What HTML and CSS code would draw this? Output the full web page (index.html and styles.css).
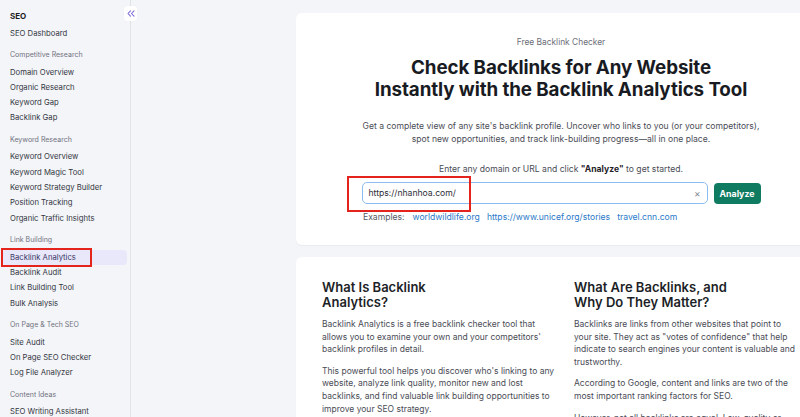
FILE: index.html
```html
<!DOCTYPE html>
<html>
<head>
<meta charset="utf-8">
<link rel="stylesheet" href="styles.css">
</head>
<body>
<div class="app">
  <aside class="sidebar">
    <button class="collapse" aria-label="Collapse">
      <svg width="8" height="7" viewBox="0 0 8 7"><path d="M3.5 0.8 L1 3.5 L3.5 6.2 M7 0.8 L4.5 3.5 L7 6.2" fill="none" stroke="#7b68d9" stroke-width="1.1" stroke-linecap="round" stroke-linejoin="round"/></svg>
    </button>
    <div class="group first">
      <div class="title">SEO</div>
      <a class="item">SEO Dashboard</a>
    </div>
    <div class="group">
      <div class="head">Competitive Research</div>
      <a class="item">Domain Overview</a>
      <a class="item">Organic Research</a>
      <a class="item">Keyword Gap</a>
      <a class="item">Backlink Gap</a>
    </div>
    <div class="group">
      <div class="head">Keyword Research</div>
      <a class="item">Keyword Overview</a>
      <a class="item">Keyword Magic Tool</a>
      <a class="item">Keyword Strategy Builder</a>
      <a class="item">Position Tracking</a>
      <a class="item">Organic Traffic Insights</a>
    </div>
    <div class="group">
      <div class="head">Link Building</div>
      <a class="item active">Backlink Analytics<span class="mark mark-side"></span></a>
      <a class="item">Backlink Audit</a>
      <a class="item">Link Building Tool</a>
      <a class="item">Bulk Analysis</a>
    </div>
    <div class="group">
      <div class="head">On Page &amp; Tech SEO</div>
      <a class="item">Site Audit</a>
      <a class="item">On Page SEO Checker</a>
      <a class="item">Log File Analyzer</a>
    </div>
    <div class="group">
      <div class="head">Content Ideas</div>
      <a class="item">SEO Writing Assistant</a>
    </div>
  </aside>
  <main class="main">
    <section class="card hero">
      <div class="eyebrow">Free Backlink Checker</div>
      <h1>Check Backlinks for Any Website<br>Instantly with the Backlink Analytics Tool</h1>
      <p class="lead">Get a complete view of any site's backlink profile. Uncover who links to you (or your competitors),<br>spot new opportunities, and track link-building progress—all in one place.</p>
      <p class="prompt">Enter any domain or URL and click <b>"Analyze"</b> to get started.</p>
      <div class="form">
        <div class="input">
          <span class="value">https://nhanhoa.com/</span>
          <span class="clear">×</span>
          <span class="mark mark-input"></span>
        </div>
        <button class="analyze">Analyze</button>
      </div>
      <div class="examples">
        <span class="label">Examples:</span>
        <a>worldwildlife.org</a>
        <a>https://www.unicef.org/stories</a>
        <a>travel.cnn.com</a>
      </div>
    </section>
    <section class="card info">
      <div class="col">
        <h2>What Is Backlink<br>Analytics?</h2>
        <p>Backlink Analytics is a free backlink checker tool that allows you to examine your own and your competitors' backlink profiles in detail.</p>
        <p>This powerful tool helps you discover who's linking to any website, analyze link quality, monitor new and lost backlinks, and find valuable link building opportunities to improve your SEO strategy.</p>
      </div>
      <div class="col">
        <h2>What Are Backlinks, and<br>Why Do They Matter?</h2>
        <p>Backlinks are links from other websites that point to your site. They act as "votes of confidence" that help indicate to search engines your content is valuable and trustworthy.</p>
        <p>According to Google, content and links are two of the most important ranking factors for SEO.</p>
        <p>However, not all backlinks are equal. Low-quality or spammy links can hurt your rankings.</p>
      </div>
    </section>
  </main>
</div>
</body>
</html>
```
FILE: styles.css
```css
* { box-sizing: border-box; }
html, body {
  margin: 0;
  height: 100%;
  overflow: hidden;
}
body {
  background: #f4f5f9;
  font-family: Inter, "Noto Sans", sans-serif;
  color: #2a2c35;
}
.app {
  display: flex;
  height: 417px;
  width: 900px;
}
.sidebar {
  position: relative;
  width: 131px;
  flex: none;
  background: #f4f5f9;
  border-right: 1px solid #e2e3e9;
  padding: 9px 3px 0 2px;
}
.collapse {
  position: absolute;
  top: 6px;
  right: -7px;
  width: 13px;
  height: 15px;
  padding: 0;
  border: 0;
  border-radius: 3px;
  background: #fff;
  display: flex;
  align-items: center;
  justify-content: center;
  box-shadow: 0 0 1px rgba(0,0,0,0.08);
}
.group {
  display: flex;
  flex-direction: column;
}
.title {
  height: 14px;
  line-height: 14px;
  padding-left: 8px;
  font-size: 8px;
  font-weight: 700;
  color: #1c1d24;
  margin-bottom: 2.6px;
}
.head {
  height: 10px;
  line-height: 10px;
  margin-top: 9.2px;
  margin-bottom: 4.5px;
  padding-left: 8px;
  font-size: 7px;
  color: #70727e;
}
.item {
  position: relative;
  height: 15.3px;
  line-height: 15.3px;
  padding-left: 8px;
  font-size: 7.7px;
  color: #33353f;
  border-radius: 4px;
}
.item.active {
  background: #e9e7fa;
  color: #3a3767;
}
.mark {
  position: absolute;
  border: 2px solid #e3231c;
  pointer-events: none;
}
.mark-side {
  left: -1px;
  top: -2px;
  width: 91px;
  height: 19px;
}
.main {
  flex: none;
  width: 769px;
  padding: 13px 0 0 165px;
  display: flex;
  flex-direction: column;
  gap: 12px;
}
.card {
  flex: none;
  background: #fff;
  width: 530px;
  border-radius: 6px 0 0 6px;
  box-shadow: 0 1px 1px rgba(30,30,60,0.05);
}
.hero {
  height: 232px;
  display: flex;
  flex-direction: column;
  align-items: center;
  padding: 23px 0 0;
}
.eyebrow {
  font-size: 8.4px;
  color: #6c6e79;
  line-height: 12px;
}
h1 {
  margin: 9px 0 0;
  font-size: 18.8px;
  line-height: 22px;
  font-weight: 700;
  text-align: center;
  color: #191b23;
  letter-spacing: -0.1px;
}
.lead {
  margin: 19px 0 0;
  font-size: 8.6px;
  line-height: 13px;
  text-align: center;
  color: #4a4c56;
}
.prompt {
  margin: 17px 0 0;
  font-size: 8.6px;
  line-height: 12px;
  color: #4a4c56;
}
.prompt b { color: #1f2128; }
.form {
  margin-top: 7px;
  display: flex;
  gap: 6px;
  align-items: center;
}
.input {
  position: relative;
  width: 346px;
  height: 22px;
  border: 1.5px solid #8cbdf0;
  border-radius: 5px;
  display: flex;
  align-items: center;
  justify-content: space-between;
  padding: 0 6px 0 6px;
  font-size: 8.6px;
  color: #2b2d36;
}
.clear {
  color: #8a8c96;
  font-size: 10px;
}
.mark-input {
  left: -16px;
  top: -7.5px;
  width: 124px;
  height: 36px;
}
.analyze {
  width: 47px;
  height: 21px;
  border: 0;
  border-radius: 4px;
  background: #0f7b61;
  color: #fff;
  font-family: Inter, sans-serif;
  font-size: 8.8px;
  font-weight: 700;
  padding: 0;
}
.examples {
  align-self: flex-start;
  margin: 7px 0 0 67px;
  display: flex;
  gap: 7px;
  font-size: 8.6px;
  line-height: 12px;
}
.examples .label { color: #55575f; margin-right: 1px; }
.examples a { color: #2b79c9; }
.info {
  display: grid;
  grid-template-columns: 238px 226px;
  column-gap: 14px;
  padding: 23px 26px 0;
  height: 200px;
}
h2 {
  margin: 0;
  font-size: 13px;
  line-height: 15px;
  font-weight: 600;
  color: #1d1f27;
}
.col p {
  margin: 9px 0 0;
  font-size: 8.5px;
  line-height: 12.6px;
  color: #4a4c56;
}
.col h2 + p { margin-top: 8px; }
```
